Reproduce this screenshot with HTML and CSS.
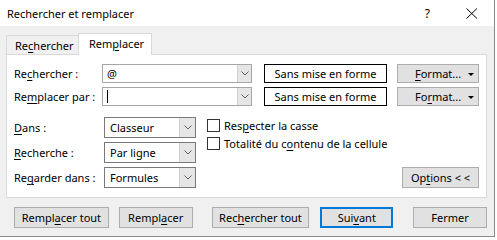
FILE: index.html
```html
<!DOCTYPE html>
<html lang="fr">
<head>
<meta charset="utf-8">
<title>Rechercher et remplacer</title>
<link rel="stylesheet" href="styles.css">
</head>
<body>
<div class="dialog">
  <div class="titlebar">
    <span class="title">Rechercher et remplacer</span>
    <span class="help">?</span>
    <svg class="close" width="12" height="11" viewBox="0 0 12 11"><path d="M0.5 0.5 L11 10.5 M11 0.5 L0.5 10.5" stroke="#000" stroke-width="1" fill="none"/></svg>
  </div>
  <div class="content">
    <div class="tabs">
      <div class="tab">Re<u>c</u>hercher</div>
      <div class="tab active">Rem<u>p</u>lacer</div>
    </div>
    <div class="panel">
      <div class="top">
        <div class="row">
          <span class="lbl">Re<u>c</u>hercher :</span>
          <div class="combo combo-wide">
            <span class="ctext">@</span>
            <span class="drop"><svg width="8" height="5" viewBox="0 0 8 5"><path d="M0.5 0.5 L4 4 L7.5 0.5" stroke="#606060" fill="none"/></svg></span>
          </div>
          <div class="fmtbox">Sans mise en forme</div>
          <div class="fmtbtn"><span><u>F</u>ormat...</span><span class="tri"></span></div>
        </div>
        <div class="row">
          <span class="lbl">Re<u>m</u>placer par :</span>
          <div class="combo combo-wide">
            <span class="ctext"><span class="caret"></span></span>
            <span class="drop"><svg width="8" height="5" viewBox="0 0 8 5"><path d="M0.5 0.5 L4 4 L7.5 0.5" stroke="#606060" fill="none"/></svg></span>
          </div>
          <div class="fmtbox">Sans mise en forme</div>
          <div class="fmtbtn"><span>Fo<u>r</u>mat...</span><span class="tri"></span></div>
        </div>
      </div>
      <div class="lower">
        <span class="lbl2"><u>D</u>ans :</span>
        <div class="combo combo-small">
          <span class="ctext">Classeur</span>
          <span class="drop"><svg width="8" height="5" viewBox="0 0 8 5"><path d="M0.5 0.5 L4 4 L7.5 0.5" stroke="#606060" fill="none"/></svg></span>
        </div>
        <div class="checks">
          <label class="check"><span class="box"></span><span>Res<u>p</u>ecter la casse</span></label>
          <label class="check"><span class="box"></span><span>Totalité du c<u>o</u>ntenu de la cellule</span></label>
        </div>
        <span class="lbl2"><u>R</u>echerche :</span>
        <div class="combo combo-small">
          <span class="ctext">Par ligne</span>
          <span class="drop"><svg width="8" height="5" viewBox="0 0 8 5"><path d="M0.5 0.5 L4 4 L7.5 0.5" stroke="#606060" fill="none"/></svg></span>
        </div>
        <span class="lbl2">Re<u>g</u>arder dans :</span>
        <div class="combo combo-small">
          <span class="ctext">Formules</span>
          <span class="drop"><svg width="8" height="5" viewBox="0 0 8 5"><path d="M0.5 0.5 L4 4 L7.5 0.5" stroke="#606060" fill="none"/></svg></span>
        </div>
        <div class="btn options">Op<u>t</u>ions &lt; &lt;</div>
      </div>
    </div>
    <div class="buttons">
      <div class="btn b-all">Rempl<u>a</u>cer tout</div>
      <div class="btn b-rep">Rempl<u>a</u>cer</div>
      <div class="btn b-find">Rec<u>h</u>ercher tout</div>
      <div class="btn b-next">Sui<u>v</u>ant</div>
      <div class="btn b-close">Fermer</div>
    </div>
  </div>
</div>
</body>
</html>
```

FILE: styles.css
```css
* { box-sizing: border-box; }
html, body { margin: 0; padding: 0; }
body {
  width: 497px;
  height: 240px;
  overflow: hidden;
  background: #ffffff;
  font-family: "Noto Sans", "Open Sans", sans-serif;
  font-size: 11px;
  color: #000;
}
u { text-decoration: underline; text-underline-offset: 2px; }

.dialog {
  width: 495px;
  height: 237px;
  background: #f0f0f0;
  border-right: 1px solid #8a8a8a;
  border-bottom: 1px solid #8a8a8a;
  display: flex;
  flex-direction: column;
}

.titlebar {
  height: 26px;
  flex: none;
  background: #ffffff;
  display: flex;
  align-items: center;
  padding-left: 7px;
  font-size: 11px;
}
.title { flex: 1; }
.help { font-size: 12px; margin-right: 36px; }
.close { margin-right: 16px; }

.content {
  flex: 1;
  padding: 7px 7px 0 6px;
}

.tabs {
  height: 21px;
  display: flex;
  align-items: flex-end;
}
.tab {
  height: 19px;
  width: 72px;
  border: 1px solid #d9d9d9;
  border-bottom: none;
  border-right: none;
  padding-left: 8px;
  display: flex;
  align-items: center;
  background: #f0f0f0;
}
.tab.active {
  height: 22px;
  width: 74px;
  margin-bottom: -1px;
  background: #ffffff;
  border-right: 1px solid #d9d9d9;
  padding-left: 10px;
  padding-bottom: 2px;
  position: relative;
  z-index: 1;
}

.panel {
  width: 481px;
  background: #ffffff;
  border: 1px solid #d9d9d9;
  padding: 9px 7px 9px 7px;
}

.top {
  display: flex;
  flex-direction: column;
  gap: 4px;
  margin-bottom: 11px;
}
.row {
  display: flex;
  align-items: center;
  height: 19px;
}
.lbl { width: 88px; flex: none; }

.combo {
  display: flex;
  align-items: stretch;
  background: #ffffff;
  border: 1px solid #a6a6a6;
}
.combo-wide { width: 150px; height: 19px; }
.combo-small { width: 92px; height: 21px; border-color: #7a7a7a; }
.ctext {
  flex: 1;
  display: flex;
  align-items: center;
  padding-left: 4px;
}
.combo-small .ctext { padding-left: 5px; }
.caret {
  display: block;
  width: 1px;
  height: 13px;
  background: #000;
}
.drop {
  width: 14px;
  flex: none;
  background: #e6e6e6;
  border-left: 1px solid #d0d0d0;
  display: flex;
  align-items: center;
  justify-content: center;
}
.combo-small .drop { width: 16px; }

.fmtbox {
  width: 123px;
  height: 19px;
  margin-left: 12px;
  border: 1px solid #000;
  background: #fff;
  display: flex;
  align-items: center;
  justify-content: center;
}
.fmtbtn {
  width: 82px;
  height: 19px;
  margin-left: 10px;
  border: 1px solid #adadad;
  background: #e1e1e1;
  display: flex;
  align-items: center;
  justify-content: space-between;
  padding: 0 4px 0 17px;
}
.tri {
  width: 0;
  height: 0;
  border-left: 3px solid transparent;
  border-right: 3px solid transparent;
  border-top: 3px solid #000;
  margin-top: 1px;
}

.lower {
  display: grid;
  grid-template-columns: 90px 92px 1fr 77px;
  grid-template-rows: 21px 21px 21px;
  row-gap: 4px;
  align-items: center;
}
.lbl2 { grid-column: 1; }
.checks {
  grid-column: 3 / span 2;
  grid-row: 1 / span 2;
  align-self: start;
  padding-left: 11px;
  padding-top: 2px;
  display: flex;
  flex-direction: column;
  gap: 5px;
}
.check {
  display: flex;
  align-items: center;
  gap: 4px;
  height: 13px;
}
.box {
  width: 13px;
  height: 13px;
  border: 1px solid #333;
  background: #fff;
  flex: none;
}

.btn {
  height: 21px;
  border: 1px solid #adadad;
  background: #e1e1e1;
  display: flex;
  align-items: center;
  justify-content: center;
}
.options {
  grid-column: 4;
  grid-row: 3;
  width: 77px;
}

.buttons {
  display: flex;
  margin-top: 9px;
  padding-left: 8px;
}
.b-all { width: 95px; }
.b-rep { width: 74px; margin-left: 10px; }
.b-find { width: 98px; margin-left: 19px; }
.b-next { width: 73px; margin-left: 11px; border: 2px solid #0078d7; }
.b-close { width: 74px; margin-left: 20px; }
```
